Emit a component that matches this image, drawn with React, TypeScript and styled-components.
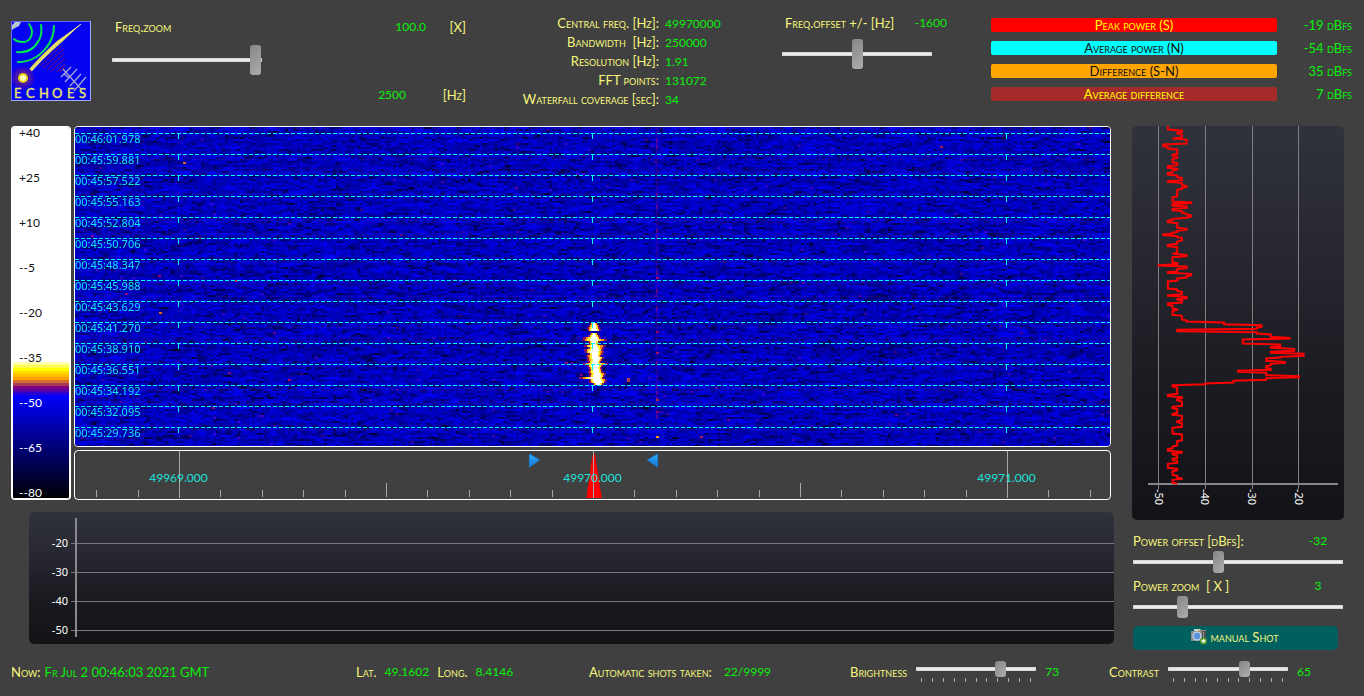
import React, { useEffect, useRef } from 'react';
import styled, { createGlobalStyle, css } from 'styled-components';

const GlobalStyle = createGlobalStyle`
  * { box-sizing: border-box; }
  body { margin: 0; background: #404040; }
`;

const LABEL = '#f7f77c';
const VALUE = '#0aee0a';

const Page = styled.div`
  min-height: 100vh;
  background: #404040;
  color: ${LABEL};
  font: 12px/18px Lato, 'Liberation Sans', sans-serif;
  display: flex;
  flex-direction: column;
`;

const caps = css`
  font-size: 13px;
  font-variant: small-caps;
  white-space: pre;
`;
const Caps = styled.span`${caps}`;
const CapsLabel = styled.label`${caps}`;

const Value = styled.output<{ $end?: boolean }>`
  color: ${VALUE};
  white-space: pre;
  text-align: ${(p) => (p.$end ? 'right' : 'left')};
`;

/* ---------- slider ---------- */

const Slider = styled.input<{ $thumb: number }>`
  appearance: none;
  display: block;
  width: 100%;
  height: ${(p) => p.$thumb}px;
  margin: 0;
  background: transparent;
  &::-webkit-slider-runnable-track {
    height: 4px;
    background: #e9eae9;
    border: 1px solid #d6d6d6;
  }
  &::-webkit-slider-thumb {
    appearance: none;
    width: 11px;
    height: ${(p) => p.$thumb}px;
    margin-top: ${(p) => 1 - p.$thumb / 2}px;
    border-radius: 3px;
    background: linear-gradient(135deg, #868686, #adadad);
  }
`;

/* ---------- header ---------- */

const Header = styled.header`
  display: grid;
  grid-template-columns: 101px 396fr 274fr 209fr 361fr;
  height: 126px;
  padding: 0 12px 0 11px;
`;

const Logo = styled.svg`
  display: block;
  width: 80px;
  height: 80px;
  margin-top: 21px;
`;

const ZoomBlock = styled.section`
  display: grid;
  grid-template-columns: 150px 1fr 40px;
  grid-template-rows: 18px 48px 22px;
  align-content: start;
  align-items: center;
  margin-right: 42px;
  padding-top: 18px;
`;

const ZoomLabel = styled(CapsLabel)`
  padding-left: 3px;
`;

const ZoomTrack = styled.div`
  grid-column: 1 / -1;
  width: 150px;
`;

const HzValue = styled(Value)`
  grid-column: 2;
  padding-right: 20px;
`;

const Unit = styled(Caps)`
  text-align: right;
`;

const Info = styled.dl`
  display: grid;
  grid-template-columns: 151px auto;
  grid-auto-rows: 19px;
  justify-content: start;
  column-gap: 6px;
  margin: 14px 0 0;
  line-height: 19px;
`;

const InfoName = styled.dt`
  ${caps}
  text-align: right;
`;

const InfoValue = styled.dd`
  margin: 0;
  color: ${VALUE};
`;

const Offset = styled.section`
  width: 165px;
  padding-top: 14px;
`;

const OffsetHead = styled.div`
  display: flex;
  justify-content: space-between;
  padding-left: 3px;
  margin-bottom: 7px;
`;

const OffsetTrack = styled.div`
  width: 150px;
`;

const Powers = styled.section`
  display: grid;
  align-content: start;
  gap: 9px;
  padding-top: 18px;
`;

const PowerRow = styled.div`
  display: grid;
  grid-template-columns: 1fr 75px;
  grid-template-rows: 14px;
  font-size: 13px;
  line-height: 15px;
  font-variant: small-caps;
`;

const PowerBar = styled.div<{ $bg: string; $fg: string }>`
  border-radius: 2px;
  background: ${(p) => p.$bg};
  color: ${(p) => p.$fg};
  text-align: center;
`;

/* ---------- main area ---------- */

const Main = styled.main`
  display: grid;
  grid-template-columns: minmax(0, 1fr) 212px;
  column-gap: 18px;
  padding: 0 20px 0 11px;
`;

const Spectrum = styled.div`
  display: grid;
  grid-template-columns: 60px minmax(0, 1fr);
  column-gap: 3px;
  margin-right: 3px;
`;

const PaletteScale = styled.div`
  display: flex;
  flex-direction: column;
  justify-content: space-between;
  height: 374px;
  padding-left: 6px;
  border: 1px solid #fff;
  border-width: 1px 2px;
  border-radius: 4px;
  line-height: 12px;
  background: linear-gradient(
    #fff 235px, #ffffa8 235px 238px, #ffff50 238px 241px, #ffff00 241px 244px,
    #ffdc00 244px 247px, #ffbe00 247px 250px, #ffa000 250px 253px, #d07030 253px 256px,
    #a83c58 256px 259px, #800080 259px 262px, #5500aa 262px 265px, #2a00d4 265px 268px,
    #0000ff 268px, #000090 310px, #000004 371px, #fff 371px
  ) padding-box;
`;

const PaletteMark = styled.span<{ $light: boolean }>`
  color: ${(p) => (p.$light ? '#fff' : '#111')};
`;

const Stack = styled.div`
  display: grid;
  grid-template-rows: 321px 50px;
  row-gap: 3px;
`;

const Frame = styled.div`
  position: relative;
  border: 1px solid #fff;
  border-radius: 4px;
  overflow: hidden;
`;

const Fill = styled.canvas`
  display: block;
  width: 100%;
  height: 319px;
`;

const Times = styled.ol`
  position: absolute;
  inset: 5px auto auto 0;
  margin: 0;
  padding: 0;
  list-style: none;
  color: #10e6f4;
  font: 11px/13px 'Noto Sans', 'DejaVu Sans', sans-serif;
  li { height: 21px; }
`;

const RulerArt = styled.svg`
  display: block;
  width: 100%;
  height: 48px;
`;

const RulerLabels = styled.div`
  position: absolute;
  inset: 18px 0 auto;
  display: grid;
  grid-template-columns: 2fr 6fr 2fr;
  text-align: center;
  color: #1fe0dc;
`;

const NoiseChart = styled.svg`
  display: block;
  width: calc(100% - 18px);
  height: 132px;
  margin: 12px 0 0 18px;
  border-radius: 5px;
  background: linear-gradient(#30333c, #282832 30%, #1a1b20 65%, #121217);
`;

const PowerChart = styled.svg`
  display: block;
  width: 212px;
  height: 394px;
  border-radius: 5px;
  background: linear-gradient(#30333c, #282830 30%, #1b1c22 65%, #121217);
`;

const AxisText = styled.text`
  fill: #fff;
  font: 11px 'Noto Sans', 'DejaVu Sans', sans-serif;
`;

const Controls = styled.section`
  padding: 12px 1px 0;
`;

const ControlHead = styled.div`
  display: flex;
  justify-content: space-between;
  line-height: 18px;
  & > ${Value} { width: 50px; text-align: center; }
`;

const ControlTrack = styled.div`
  padding: 1px 0 4px;
`;

const ShotButton = styled.button`
  display: flex;
  align-items: center;
  justify-content: center;
  gap: 4px;
  width: calc(100% - 5px);
  height: 24px;
  margin-top: 4px;
  padding: 0 2px 2px 0;
  border: 0;
  border-radius: 5px;
  background: #006060;
  color: ${LABEL};
  font: 13px/22px Lato, 'Liberation Sans', sans-serif;
`;

/* ---------- footer ---------- */

const Footer = styled.footer`
  display: grid;
  grid-template-columns: 345fr 233fr 261fr 259fr 235fr;
  margin-top: 11px;
  padding: 0 20px 0 11px;
  line-height: 22px;
`;

const Status = styled.div<{ $gap: number }>`
  display: flex;
  gap: ${(p) => p.$gap}px;
`;

const TickedTrack = styled.div`
  width: 120px;
  svg { display: block; margin-top: 1px; }
`;

/* ---------- data ---------- */

const times = [
  '00:46:01.978', '00:45:59.881', '00:45:57.522', '00:45:55.163', '00:45:52.804',
  '00:45:50.706', '00:45:48.347', '00:45:45.988', '00:45:43.629', '00:45:41.270',
  '00:45:38.910', '00:45:36.551', '00:45:34.192', '00:45:32.095', '00:45:29.736',
];
const marks = ['+40', '+25', '+10', '--5', '--20', '--35', '--50', '--65', '--80'];

/* [row, centre, core half width, reach to the left, reach to the right] */
const echo: number[][] = [
  [196, 519, 1, 1, 1], [198, 519, 2, 1, 1], [200, 519, 2, 3, 2], [202, 519, 3, 1, 2],
  [206, 519, 1, 1, 1], [208, 519, 2, 2, 2], [210, 519, 3, 6, 2], [212, 519, 4, 6, 7],
  [214, 519, 2, 2, 2], [216, 519, 2, 1, 1], [218, 519, 3, 5, 7], [220, 520, 3, 2, 4],
  [222, 520, 4, 5, 2], [224, 519, 4, 3, 4], [226, 520, 3, 2, 3], [228, 520, 3, 4, 1],
  [230, 521, 4, 3, 2], [232, 521, 3, 4, 1], [234, 520, 3, 2, 1], [236, 520, 3, 7, 8],
  [238, 520, 4, 2, 2], [240, 520, 3, 1, 2], [242, 521, 3, 2, 1], [244, 521, 3, 3, 2],
  [246, 522, 3, 3, 4], [248, 522, 4, 2, 2], [250, 520, 5, 9, 2], [252, 522, 4, 2, 4],
  [254, 523, 4, 3, 2], [256, 523, 2, 1, 2],
];

/* isolated bright cells: x, y, colour */
const sparks: [number, number, string][] = [
  [108, 35, '#e06030'], [84, 185, '#e06020'], [50, 166, '#900080'], [160, 153, '#a02050'],
  [83, 148, '#900080'], [16, 108, '#900080'], [865, 19, '#a01060'], [552, 251, '#b03c50'],
  [137, 280, '#900080'], [581, 309, '#ff9000'], [625, 309, '#b02060'], [213, 252, '#a01060'],
  [153, 245, '#900080'], [411, 195, '#600090'], [552, 253, '#b03c50'], [581, 150, '#a01060'],
  [581, 225, '#a01060'], [581, 272, '#b03040'], [581, 284, '#900070'], [581, 204, '#900070'],
  [490, 235, '#900070'], [496, 235, '#6000a0'], [505, 247, '#800080'], [640, 260, '#6000a0'],
  [652, 292, '#6000a0'], [198, 205, '#600090'], [124, 110, '#700090'], [820, 287, '#6000a0'],
  [945, 205, '#500090'], [727, 155, '#500090'], [325, 107, '#600090'], [440, 60, '#600090'],
];

/* power trace, three samples per pixel: sample, dB */
const trace: [number, number][] = [
  [20, -48], [30, -45], [37, -46], [42, -45], [54, -47], [57, -44], [72, -49], [80, -48],
  [87, -46], [103, -47], [108, -46], [115, -47], [128, -46], [137, -48], [145, -46],
  [150, -47], [158, -48], [165, -46], [173, -45], [182, -48], [187, -45], [197, -44],
  [202, -45], [208, -46], [231, -47], [246, -43], [251, -47], [258, -44], [265, -47],
  [272, -45], [280, -44], [285, -43], [291, -44], [295, -47], [301, -48], [308, -46],
  [325, -44], [331, -46], [337, -47], [342, -49], [347, -46], [353, -45], [363, -46],
  [373, -48], [380, -46], [400, -47], [403, -44], [410, -47], [428, -46], [434, -50],
  [438, -44], [446, -46], [455, -48], [460, -43], [467, -44], [474, -46], [483, -48],
  [507, -46], [514, -45], [524, -48], [529, -44], [536, -46], [540, -45], [549, -48],
  [556, -47], [567, -46], [571, -47], [586, -45], [600, -44], [606, -36], [614, -28],
  [622, -29], [628, -46], [635, -29], [642, -26], [652, -22], [657, -32], [672, -24],
  [680, -26], [685, -21], [694, -26], [700, -19], [709, -24], [714, -27], [724, -23],
  [730, -26], [737, -27], [745, -26], [751, -33], [757, -27], [767, -20], [773, -27],
  [781, -34], [789, -40], [794, -47], [801, -46], [823, -48], [830, -45], [836, -46],
  [843, -45], [859, -47], [866, -46], [880, -47], [886, -45], [902, -46], [908, -45],
  [922, -47], [942, -45], [962, -46], [978, -47], [986, -48], [994, -45], [999, -47],
  [1005, -46], [1015, -47], [1021, -46], [1030, -48], [1045, -46], [1052, -47],
  [1066, -46], [1074, -45], [1078, -47], [1090, -46],
];
const dbX = (db: number) => 26.5 + (db + 50) * 4.68;
const tracePath = trace
  .map(([n, db], i) => {
    const y = (n - 18) / 3;
    return i === 0 ? `M${dbX(db)} 0V${y}` : `V${y - 0.5}L${dbX(db)} ${y + 0.5}`;
  })
  .join('');

function drawWaterfall(ctx: CanvasRenderingContext2D, w: number, h: number) {
  let seed = 20210702;
  const rnd = () => {
    seed = (seed * 1664525 + 1013904223) >>> 0;
    return seed / 4294967296;
  };
  for (let y = 0; y < h; y += 2) {
    const rowLevel = 186 + rnd() * 18;
    let v = rowLevel;
    for (let x = 0; x < w; x += 3) {
      const target = rnd() < 0.12 ? 20 + rnd() * 110 : rowLevel + (rnd() - 0.5) * 120;
      v = v * 0.4 + target * 0.6;
      const b = Math.max(20, Math.min(255, v));
      ctx.fillStyle = `rgb(${rnd() < 0.004 ? 60 : 0},0,${Math.round(b)})`;
      ctx.fillRect(x, y, 3, 2);
    }
  }
  ctx.fillStyle = 'rgba(110,0,150,0.25)';
  ctx.fillRect(581, 0, 2, 290);
  for (let y = 0; y < 290; y += 6) {
    if (rnd() < 0.3) {
      ctx.fillStyle = 'rgba(130,0,140,0.6)';
      ctx.fillRect(581, y, 2, 4);
    }
  }
  sparks.forEach(([x, y, c]) => {
    ctx.fillStyle = c;
    ctx.fillRect(x, y, 3, 2);
  });
  const layers: [string, number, number][] = [
    ['#8c1060', 1, 2], ['#ff9000', 0.7, 1], ['#ffee30', 0.35, 1], ['#ffffff', 0, 0],
  ];
  layers.forEach(([c, reach, extra]) => {
    ctx.fillStyle = c;
    echo.forEach(([y, cx, core, l, r]) => {
      const left = Math.round(cx - core - l * reach - extra);
      const right = Math.round(cx + core + r * reach + extra);
      ctx.fillRect(left, y, right - left, 2);
    });
  });
  ctx.fillStyle = '#00ffff';
  for (let y = 6; y < h; y += 21) {
    for (let x = 0; x < w; x += 6) ctx.fillRect(x, y, 4, 1);
    [0.1, 0.5, 0.9].forEach((f) => ctx.fillRect(Math.floor(w * f), y + 1, 1, 5));
  }
}

function Waterfall() {
  const ref = useRef<HTMLCanvasElement>(null);
  useEffect(() => {
    const ctx = ref.current?.getContext('2d');
    if (ctx) drawWaterfall(ctx, 1035, 319);
  }, []);
  return <Fill ref={ref} width={1035} height={319} aria-label="Waterfall" />;
}

function Ruler() {
  const ticks = Array.from({ length: 25 }, (_, i) => i - 12).filter((k) => k % 10 !== 0);
  return (
    <Frame>
      <RulerArt aria-hidden="true">
        <defs>
          <linearGradient id="marker" x1="0" y1="0" x2="0" y2="1">
            <stop offset="0" stopColor="#2cb4ff" />
            <stop offset="1" stopColor="#1470cc" />
          </linearGradient>
        </defs>
        <svg x="1" overflow="visible">
          <svg x="50%" overflow="visible">
            <polygon points="0,1 2,5 3,14 5,24 6,34 8,44 8,47 -7,47 -6,38 -4,28 -3,16 -1,5" fill="#f00" />
            <polygon points="-64,3 -64,16 -54,9" fill="url(#marker)" stroke="#1a80d8" />
            <polygon points="64,3 64,16 54,9" fill="url(#marker)" stroke="#1a80d8" />
          </svg>
          {ticks.map((k) => (
            <line key={k} x1={`${50 + k * 4}%`} x2={`${50 + k * 4}%`} y1={k % 5 === 0 ? 32 : 39} y2="46" stroke="#a8a8a8" shapeRendering="crispEdges" />
          ))}
          {[10, 50, 90].map((p) => (
            <line key={p} x1={`${p}%`} x2={`${p}%`} y1="0" y2="47" stroke="#a8a8a8" shapeRendering="crispEdges" />
          ))}
        </svg>
      </RulerArt>
      <RulerLabels>
        <span>49969.000</span>
        <span>49970.000</span>
        <span>49971.000</span>
      </RulerLabels>
    </Frame>
  );
}

function EchoesLogo() {
  return (
    <Logo viewBox="0 0 80 80" role="img" aria-label="Echoes">
      <rect width="80" height="80" fill="#0404f0" />
      <path d="M.5 80V.5H80" fill="none" stroke="#6a6af0" />
      <path d="M79.5 0v79.5H0" fill="none" stroke="#a8a8f8" />
      <path d="M1 9V4l3-3h6l-2 4-4 2z" fill="#b4c8d4" />
      <g fill="none" stroke="#00e850" strokeWidth="2" strokeLinecap="round">
        <path d="M18 3c6 8 2 18-6 18-4 0-7-1-9-3" />
        <path d="M30 4c1 6 1 10-2 15-5 10-13 13-22 12" />
        <path d="M43 5c0 8-2 15-8 22-8 10-17 14-28 14" />
      </g>
      <g stroke="#7c0868" strokeWidth="1">
        <path d="M51 24 28 46M53 28 32 47M53 33 36 49M54 38 40 50M54 43 46 51M48 23 34 36M54 46l-5 5" />
      </g>
      <path d="M70 3 46 20Q28 36 13 54l4 1Q32 37 51 21z" fill="#ddd65c" />
      <path d="M70 3 44 24 20 50" fill="none" stroke="#f0ec90" />
      <circle cx="12" cy="57" r="11" fill="#3008c8" />
      <circle cx="12" cy="57" r="8" fill="#4a18a8" />
      <circle cx="12" cy="57" r="5" fill="#e8c810" />
      <circle cx="12" cy="57" r="3" fill="#ffffc0" />
      <g stroke="#a8a8d0" strokeWidth="1.2">
        <path d="M52 48 70 68M50 56l10-10M54 61l12-13M59 65l11-12M63 70l12-14M53 53l5 4" />
      </g>
      <text x="3 15 28 41 56 68" y="77" fill="#e8e468" stroke="#e8e468" strokeWidth=".4" fontFamily="Lato, sans-serif" fontSize="13">ECHOES</text>
    </Logo>
  );
}

function CameraIcon() {
  return (
    <svg width="16" height="16" viewBox="0 0 16 16" aria-hidden="true">
      <path d="M0 2h3V0h7v1h5v11H0z" fill="#8c8c8c" />
      <path d="M0 2h3V0h6v2z" fill="#d0d0d0" />
      <path d="M11 2h4v9h-4z" fill="#505050" />
      <path d="M12.500 3v7" stroke="#909090" />
      <rect x="7" y="1" width="2" height="1" fill="#f0b040" />
      <circle cx="6" cy="7" r="4.5" fill="#d8e4f4" />
      <circle cx="6" cy="7" r="3.5" fill="#5c94dc" />
      <circle cx="12.5" cy="12" r="3.5" fill="#5a9c2c" />
      <path d="M12.5 10v4M10.5 12h4" stroke="#fff" strokeWidth="1.3" />
    </svg>
  );
}

function FooterSlider({ id, label, value }: { id: string; label: string; value: number }) {
  return (
    <Status $gap={9}>
      <CapsLabel htmlFor={id}>{label}</CapsLabel>
      <TickedTrack>
        <Slider id={id} type="range" min={0} max={100} defaultValue={value} $thumb={16} />
        <svg width="120" height="4" aria-hidden="true">
          {Array.from({ length: 11 }, (_, i) => (
            <rect key={i} x={5 + Math.round(i * 10.9)} width="1" height="4" fill="#b0b0a0" />
          ))}
        </svg>
      </TickedTrack>
      <Value htmlFor={id}>{value}</Value>
    </Status>
  );
}

const info: [string, string][] = [
  ['Central freq. [Hz]:', '49970000'],
  ['Bandwidth  [Hz]:', '250000'],
  ['Resolution [Hz]:', '1.91'],
  ['FFT points:', '131072'],
  ['Waterfall coverage [sec]:', '34'],
];

const powers: [string, string, string, string][] = [
  ['Peak power (S)', '-19 dBfs', '#ff0000', '#ffff00'],
  ['Average power (N)', '-54 dBfs', '#00ffff', '#101010'],
  ['Difference (S-N)', '35 dBfs', '#ffa500', '#101010'],
  ['Average difference', '7 dBfs', '#a52a2a', '#ffff00'],
];

export default function App() {
  return (
    <Page>
      <GlobalStyle />
      <Header>
        <EchoesLogo />
        <ZoomBlock>
          <ZoomLabel htmlFor="zoom">Freq.zoom</ZoomLabel>
          <Value $end>100.0</Value>
          <Unit>[X]</Unit>
          <ZoomTrack>
            <Slider id="zoom" type="range" defaultValue={100} $thumb={30} />
          </ZoomTrack>
          <HzValue $end>2500</HzValue>
          <Unit>[Hz]</Unit>
        </ZoomBlock>
        <Info>
          {info.map(([k, v]) => (
            <React.Fragment key={k}>
              <InfoName>{k}</InfoName>
              <InfoValue>{v}</InfoValue>
            </React.Fragment>
          ))}
        </Info>
        <Offset>
          <OffsetHead>
            <CapsLabel htmlFor="offset">Freq.offset +/- [Hz]</CapsLabel>
            <Value>-1600</Value>
          </OffsetHead>
          <OffsetTrack>
            <Slider id="offset" type="range" defaultValue={50} $thumb={30} />
          </OffsetTrack>
        </Offset>
        <Powers>
          {powers.map(([name, value, bg, fg]) => (
            <PowerRow key={name}>
              <PowerBar $bg={bg} $fg={fg}>{name}</PowerBar>
              <Value $end>{value}</Value>
            </PowerRow>
          ))}
        </Powers>
      </Header>

      <Main>
        <div>
          <Spectrum>
            <PaletteScale>
              {marks.map((m, i) => (
                <PaletteMark key={m} $light={i > 5}>{m}</PaletteMark>
              ))}
            </PaletteScale>
            <Stack>
              <Frame>
                <Waterfall />
                <Times>
                  {times.map((t) => <li key={t}>{t}</li>)}
                </Times>
              </Frame>
              <Ruler />
            </Stack>
          </Spectrum>
          <NoiseChart aria-label="Noise level">
            {[['-20', 31], ['-30', 60], ['-40', 89], ['-50', 118]].map(([t, y]) => (
              <g key={t}>
                <line x1="42" x2="100%" y1={y} y2={y} stroke="#77777c" strokeWidth="1" shapeRendering="crispEdges" />
                <AxisText x="39" y={Number(y) + 4} textAnchor="end">{t}</AxisText>
              </g>
            ))}
            <line x1="47" x2="47" y1="6" y2="125" stroke="#8a8a8e" strokeWidth="2" />
          </NoiseChart>
        </div>
        <div>
          <PowerChart viewBox="0 0 212 394" aria-label="Power history">
            {[-50, -40, -30, -20].map((db) => (
              <g key={db}>
                <line x1={Math.floor(dbX(db)) + 0.5} x2={Math.floor(dbX(db)) + 0.5} y1="0" y2="363" stroke="#808084" />
                <AxisText transform={`translate(${dbX(db) - 4} 363) rotate(90)`}>{db}</AxisText>
              </g>
            ))}
            <line x1="16" x2="206" y1="358" y2="358" stroke="#86868a" strokeWidth="2" />
            <path d={tracePath} fill="none" stroke="#f00" strokeWidth="2" />
          </PowerChart>
          <Controls>
            <ControlHead>
              <CapsLabel htmlFor="poffset">Power offset [dBfs]:</CapsLabel>
              <Value>-32</Value>
            </ControlHead>
            <ControlTrack>
              <Slider id="poffset" type="range" defaultValue={40} $thumb={22} />
            </ControlTrack>
            <ControlHead>
              <CapsLabel htmlFor="pzoom">Power zoom  [ X ]</CapsLabel>
              <Value>3</Value>
            </ControlHead>
            <ControlTrack>
              <Slider id="pzoom" type="range" defaultValue={22} $thumb={22} />
            </ControlTrack>
            <ShotButton type="button">
              <CameraIcon />
              <Caps>manual Shot</Caps>
            </ShotButton>
          </Controls>
        </div>
      </Main>

      <Footer>
        <Status $gap={4}><Caps>Now:</Caps><Value as="span"><Caps>Fr Jul 2 00:46:03 2021 GMT</Caps></Value></Status>
        <Status $gap={8}><Caps>Lat.</Caps><Value>49.1602</Value><Caps>Long.</Caps><Value>8.4146</Value></Status>
        <Status $gap={12}><Caps>Automatic shots taken:</Caps><Value>22/9999</Value></Status>
        <FooterSlider id="brightness" label="Brightness" value={73} />
        <FooterSlider id="contrast" label="Contrast" value={65} />
      </Footer>
    </Page>
  );
}
